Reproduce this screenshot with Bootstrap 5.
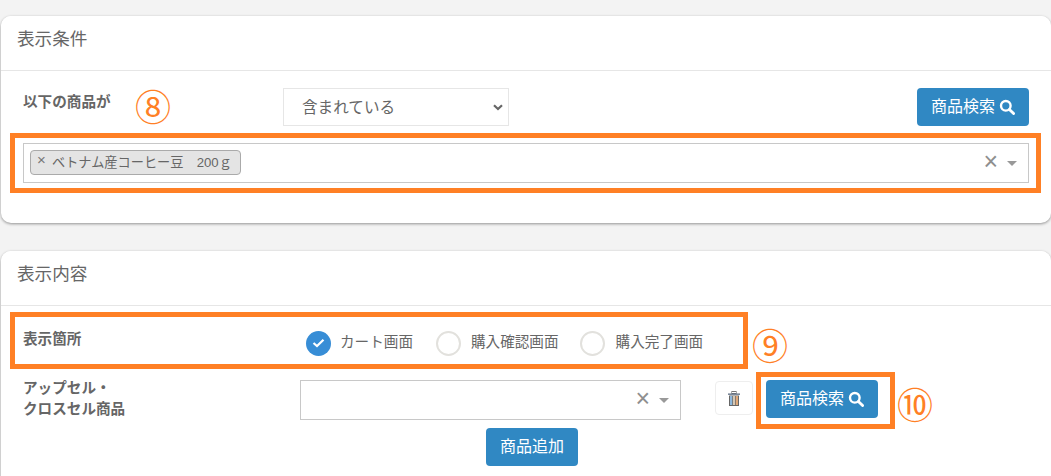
<!DOCTYPE html>
<html lang="ja">
<head>
    <meta charset="UTF-8">
    <meta name="viewport" content="width=device-width, initial-scale=1.0">
    <title>表示条件</title>
    <link rel="stylesheet" href="https://cdn.jsdelivr.net/npm/bootstrap@5.3.0/dist/css/bootstrap.min.css">
    <style>
        html, body { height: 476px; overflow: hidden; }
        body { background: #f3f3f3; color: #666; font-family: "Liberation Sans", "Noto Sans CJK JP", sans-serif; }
        .page-wrap { position: relative; height: 476px; padding: 16px 0 0 1px; overflow: hidden; }

        .panel { border: 0; border-radius: 10px; background: #fff; box-shadow: 0 1px 3px rgba(0,0,0,.4); margin-bottom: 28px; }
        .panel .card-header { height: 55px; padding: 0 16px; background: #fff; border-bottom: 1px solid #e6e6e6; border-radius: 10px 10px 0 0; font-size: 17.6px; line-height: 46px; color: #666; }
        .panel .card-body { padding: 0 22px; }
        .panel-one { height: 207px; }
        .panel-one .card-body { padding-top: 17px; }
        .panel-two { height: 260px; }

        .field-label { font-size: 14.6px; font-weight: 700; color: #666; line-height: 21px; }
        .label-one { width: 260px; padding-top: 4px; }
        .plain-select { width: 226px; height: 38px; padding: 2px 18px 0; border: 1px solid #e6e6e6; border-radius: 0; font-size: 15.6px; color: #666; background-image: url("data:image/svg+xml,%3csvg xmlns='http://www.w3.org/2000/svg' viewBox='0 0 10 7'%3e%3cpath fill='none' stroke='%23666' stroke-width='2.2' d='M1 1.2 5 5 9 1.2'/%3e%3c/svg%3e"); background-position: right 5px center; background-size: 10px 7px; }

        .btn-blue { background: #3088c3; border: 0; border-radius: 4px; color: #fff; font-size: 16px; line-height: 1; height: 38px; padding: 0 14px; display: inline-flex; align-items: center; white-space: nowrap; }
        .btn-blue:hover { background: #2b7ab0; color: #fff; }
        .btn-blue svg { margin-left: 4px; }

        .multi-box { height: 40px; margin-top: 17px; border: 1px solid #c8c8c8; padding: 0 6px; background: #fff; }
        .multi-box .clear-x { color: #8f8f8f; font-size: 25px; line-height: 1; font-weight: 300; margin-top: -3px; }
        .multi-box .drop-arrow { width: 0; height: 0; margin: 0 5px 0 9px; border-left: 5px solid transparent; border-right: 5px solid transparent; border-top: 5px solid #999; }
        .chip { height: 25px; width: 211px; margin-top: -1px; border: 1px solid #aaa; border-radius: 4px; background: #e4e4e4; font-size: 13.2px; line-height: 23px; padding: 0 0 0 6px; color: #666; white-space: nowrap; }
        .chip-x { display: inline-block; width: 15px; font-size: 15px; line-height: 15px; vertical-align: 2px; color: #777; }

        .place-row { height: 26px; margin-top: 24px; }
        .label-two { width: 283px; margin-top: -8px; }
        .radio-item { font-size: 14.6px; color: #666; margin-top: -1px; }
        .radio-dot { width: 25px; height: 25px; border-radius: 50%; border: 2px solid #e2e1dd; margin-right: 9px; background: #fff; flex: none; margin-top: 1px; }
        .radio-dot.is-on { border: 0; background: #378dd6; display: flex; align-items: center; justify-content: center; }
        .radio-first { margin-right: 23px; }
        .radio-second { margin-right: 21px; }
        .radio-second .radio-dot { margin-right: 10px; }
        .radio-third .radio-dot { margin-right: 11px; }

        .goods-row { margin-top: 24px; }
        .label-three { width: 277px; line-height: 21px; margin-top: -2px; }
        .goods-box { width: 381px; margin-top: 0; }
        .trash-btn { width: 38px; height: 34px; margin: 1px 13px 0 34px; padding: 0; border: 1px solid #eee; border-radius: 4px; background: #fff; display: flex; align-items: center; justify-content: center; }
        .add-row { margin: 8px 0 0 463px; }

        .note-box { position: absolute; border: 5px solid #ff8025; pointer-events: none; }
        .box-8 { left: 10px; top: 133px; width: 1031px; height: 60px; }
        .box-9 { left: 10px; top: 312px; width: 738px; height: 57px; }
        .box-10 { left: 756px; top: 372px; width: 139px; height: 57px; }
        .note-num { position: absolute; color: #ff8025; font-size: 36px; line-height: 44px; width: 44px; text-align: center; font-family: "Noto Sans CJK JP", sans-serif; }
        .num-8 { left: 131px; top: 83px; }
        .num-9 { left: 748px; top: 322px; }
        .num-10 { left: 893px; top: 381px; }
    </style>
</head>
<body>
    <div class="page-wrap">

        <!-- 表示条件 -->
        <div class="card panel panel-one">
            <div class="card-header">表示条件</div>
            <div class="card-body">
                <div class="d-flex align-items-start">
                    <div class="field-label label-one">以下の商品が</div>
                    <select class="form-select plain-select">
                        <option>含まれている</option>
                    </select>
                    <button class="btn btn-blue ms-auto" type="button">商品検索
                        <svg width="16" height="16" viewBox="0 0 16 16" fill="none" stroke="#fff"><circle cx="6.8" cy="6.8" r="4.8" stroke-width="2.4"/><path d="M10.4 10.4 14.6 14.6" stroke-width="2.8" stroke-linecap="round"/></svg>
                    </button>
                </div>
                <div class="multi-box d-flex align-items-center">
                    <div class="chip"><span class="chip-x">×</span>ベトナム産コーヒー豆　200ｇ</div>
                    <span class="clear-x ms-auto">×</span>
                    <span class="drop-arrow"></span>
                </div>
            </div>
        </div>

        <!-- 表示内容 -->
        <div class="card panel panel-two">
            <div class="card-header">表示内容</div>
            <div class="card-body">
                <div class="place-row d-flex align-items-center">
                    <div class="field-label label-two">表示箇所</div>
                    <div class="radio-item radio-first d-flex align-items-center">
                        <span class="radio-dot is-on">
                            <svg width="13" height="10" viewBox="0 0 13 10" fill="none" stroke="#fff" stroke-width="2.2"><path d="M1.5 5 5 8 11.5 1.8"/></svg>
                        </span>カート画面
                    </div>
                    <div class="radio-item radio-second d-flex align-items-center"><span class="radio-dot"></span>購入確認画面</div>
                    <div class="radio-item radio-third d-flex align-items-center"><span class="radio-dot"></span>購入完了画面</div>
                </div>

                <div class="goods-row d-flex align-items-start">
                    <div class="field-label label-three">アップセル・<br>クロスセル商品</div>
                    <div class="multi-box goods-box d-flex align-items-center">
                        <span class="clear-x ms-auto">×</span>
                        <span class="drop-arrow"></span>
                    </div>
                    <button class="trash-btn" type="button">
                        <svg width="12" height="15" viewBox="0 0 12 15"><rect x="3.9" y=".5" width="4.2" height="2" fill="none" stroke="#777"/><rect y="2.5" width="12" height="1.3" fill="#5b6b80"/><rect x="1" y="4.5" width="10" height="10.5" fill="#666"/><rect x="2" y="5" width="2.2" height="9" fill="#8fb8dc"/><rect x="4.9" y="5" width="2.2" height="9" fill="#d6c7b4"/><rect x="7.8" y="5" width="2.2" height="9" fill="#e0a878"/></svg>
                    </button>
                    <button class="btn btn-blue" type="button">商品検索
                        <svg width="16" height="16" viewBox="0 0 16 16" fill="none" stroke="#fff"><circle cx="6.8" cy="6.8" r="4.8" stroke-width="2.4"/><path d="M10.4 10.4 14.6 14.6" stroke-width="2.8" stroke-linecap="round"/></svg>
                    </button>
                </div>
                <div class="add-row">
                    <button class="btn btn-blue" type="button">商品追加</button>
                </div>
            </div>
        </div>

        <!-- 注釈 -->
        <div class="note-box box-8"></div>
        <div class="note-box box-9"></div>
        <div class="note-box box-10"></div>
        <div class="note-num num-8">⑧</div>
        <div class="note-num num-9">⑨</div>
        <div class="note-num num-10">⑩</div>
    </div>
    <script src="https://cdn.jsdelivr.net/npm/bootstrap@5.3.0/dist/js/bootstrap.bundle.min.js"></script>
</body>
</html>
